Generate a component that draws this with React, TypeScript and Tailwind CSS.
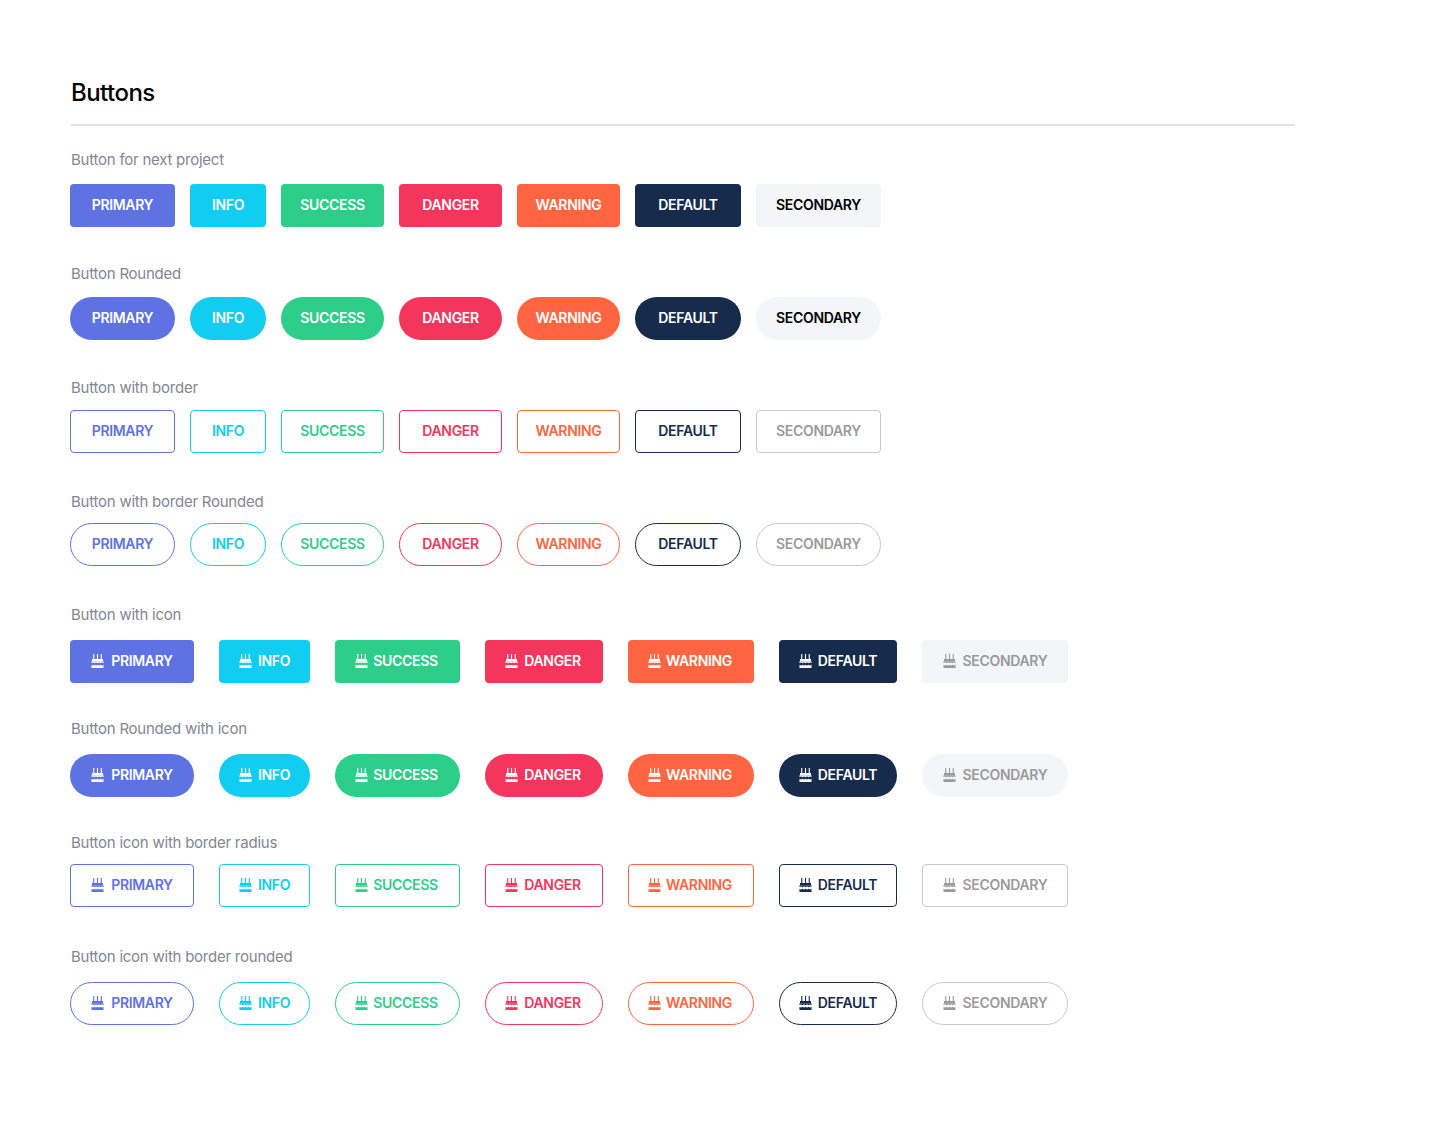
import React from "react";

type ColorName = "primary" | "info" | "success" | "danger" | "warning" | "default" | "secondary";
type Variant = "solid" | "outline";

const solid: Record<ColorName, string> = {
  primary: "bg-[#5e72e4] text-white",
  info: "bg-[#11cdef] text-white",
  success: "bg-[#2dce89] text-white",
  danger: "bg-[#f5365c] text-white",
  warning: "bg-[#ff6540] text-white",
  default: "bg-[#172b4d] text-white",
  secondary: "bg-[#f4f5f7] text-black",
};

const outline: Record<ColorName, string> = {
  primary: "border border-[#5e72e4] text-[#5e72e4]",
  info: "border border-[#11cdef] text-[#11cdef]",
  success: "border border-[#2dce89] text-[#2dce89]",
  danger: "border border-[#f5365c] text-[#f5365c]",
  warning: "border border-[#ff6540] text-[#ff6540]",
  default: "border border-[#172b4d] text-[#172b4d]",
  secondary: "border border-[#c8c8c8] text-[#9a9a9a]",
};

const plainWidths: [ColorName, string, string, string][] = [
  ["primary", "PRIMARY", "w-[105px]", ""],
  ["info", "INFO", "w-[76px]", ""],
  ["success", "SUCCESS", "w-[103px]", ""],
  ["danger", "DANGER", "w-[103px]", ""],
  ["warning", "WARNING", "w-[103px]", ""],
  ["default", "DEFAULT", "w-[106px]", ""],
  ["secondary", "SECONDARY", "w-[125px]", ""],
];

const iconWidths: [ColorName, string, string, string][] = [
  ["primary", "PRIMARY", "w-[124px]", "gap-[7px]"],
  ["info", "INFO", "w-[91px]", "gap-[6px]"],
  ["success", "SUCCESS", "w-[125px]", "gap-[5px] pr-[2px]"],
  ["danger", "DANGER", "w-[118px]", "gap-[6px] pr-[2px]"],
  ["warning", "WARNING", "w-[126px]", "gap-[5px] pr-[2px]"],
  ["default", "DEFAULT", "w-[118px]", "gap-[6px]"],
  ["secondary", "SECONDARY", "w-[146px]", "gap-[7px]"],
];

function Cake() {
  return (
    <svg width="13" height="14" viewBox="0 0 13 14" fill="currentColor" className="shrink-0">
      <rect x="2.2" y="0" width="1.1" height="6" />
      <rect x="5.95" y="0" width="1.1" height="6" />
      <rect x="9.7" y="0" width="1.1" height="6" />
      <rect x="1" y="5" width="11" height="2.2" />
      <path d="M0.5 7.2h12v2c-1-.8-2-.8-3 0-1-.8-2-.8-3 0-1-.8-2-.8-3 0-1-.8-2-.8-3 0z" />
      <path d="M0.5 10.8c1 .8 2 .8 3 0 1 .8 2 .8 3 0 1 .8 2 .8 3 0 1 .8 2 .8 3 0V14h-12z" />
    </svg>
  );
}

function Row({
  variant,
  pill,
  icon,
  className,
}: {
  variant: Variant;
  pill?: boolean;
  icon?: boolean;
  className: string;
}) {
  const items = icon ? iconWidths : plainWidths;
  return (
    <div className={`flex ${icon ? "gap-[25px]" : "gap-[15px]"} ${className}`}>
      {items.map(([c, label, w, gap]) => (
        <button
          key={c}
          className={`${w} ${gap} h-[43px] pb-[2px] flex items-center justify-center text-[14px] font-semibold tracking-[-0.33px] ${
            pill ? "rounded-full" : "rounded-[4px]"
          } ${variant === "solid" ? solid[c] : outline[c]} ${
            icon && c === "secondary" && variant === "solid" ? "!text-[#9a9a9a]" : ""
          }`}
        >
          {icon && <Cake />}
          <span>{label}</span>
        </button>
      ))}
    </div>
  );
}

function Label({ children, className }: { children: React.ReactNode; className: string }) {
  return (
    <div className={`ml-px text-[15px] leading-[20px] tracking-[-0.24px] text-[#838694] ${className}`}>{children}</div>
  );
}

export default function App() {
  return (
    <div
      className="h-[1140px] bg-white pl-[70px] pt-[78px]"
      style={{ fontFamily: "Inter, 'Liberation Sans', sans-serif" }}
    >
      <h1 className="ml-px text-[24px] leading-[30px] font-medium tracking-[-0.55px] text-black">Buttons</h1>
      <div className="ml-px mt-[16px] h-[2px] w-[1224px] bg-[#e2e2e2]" />

      <Label className="mt-[24px]">Button for next project</Label>
      <Row variant="solid" className="mt-[14px]" />

      <Label className="mt-[37px]">Button Rounded</Label>
      <Row variant="solid" pill className="mt-[13px]" />

      <Label className="mt-[38px]">Button with border</Label>
      <Row variant="outline" className="mt-[12px]" />

      <Label className="mt-[39px]">Button with border Rounded</Label>
      <Row variant="outline" pill className="mt-[11px]" />

      <Label className="mt-[39px]">Button with icon</Label>
      <Row variant="solid" icon className="mt-[15px]" />

      <Label className="mt-[36px]">Button Rounded with icon</Label>
      <Row variant="solid" icon pill className="mt-[15px]" />

      <Label className="mt-[36px]">Button icon with border radius</Label>
      <Row variant="outline" icon className="mt-[11px]" />

      <Label className="mt-[40px]">Button icon with border rounded</Label>
      <Row variant="outline" icon pill className="mt-[15px]" />
    </div>
  );
}
